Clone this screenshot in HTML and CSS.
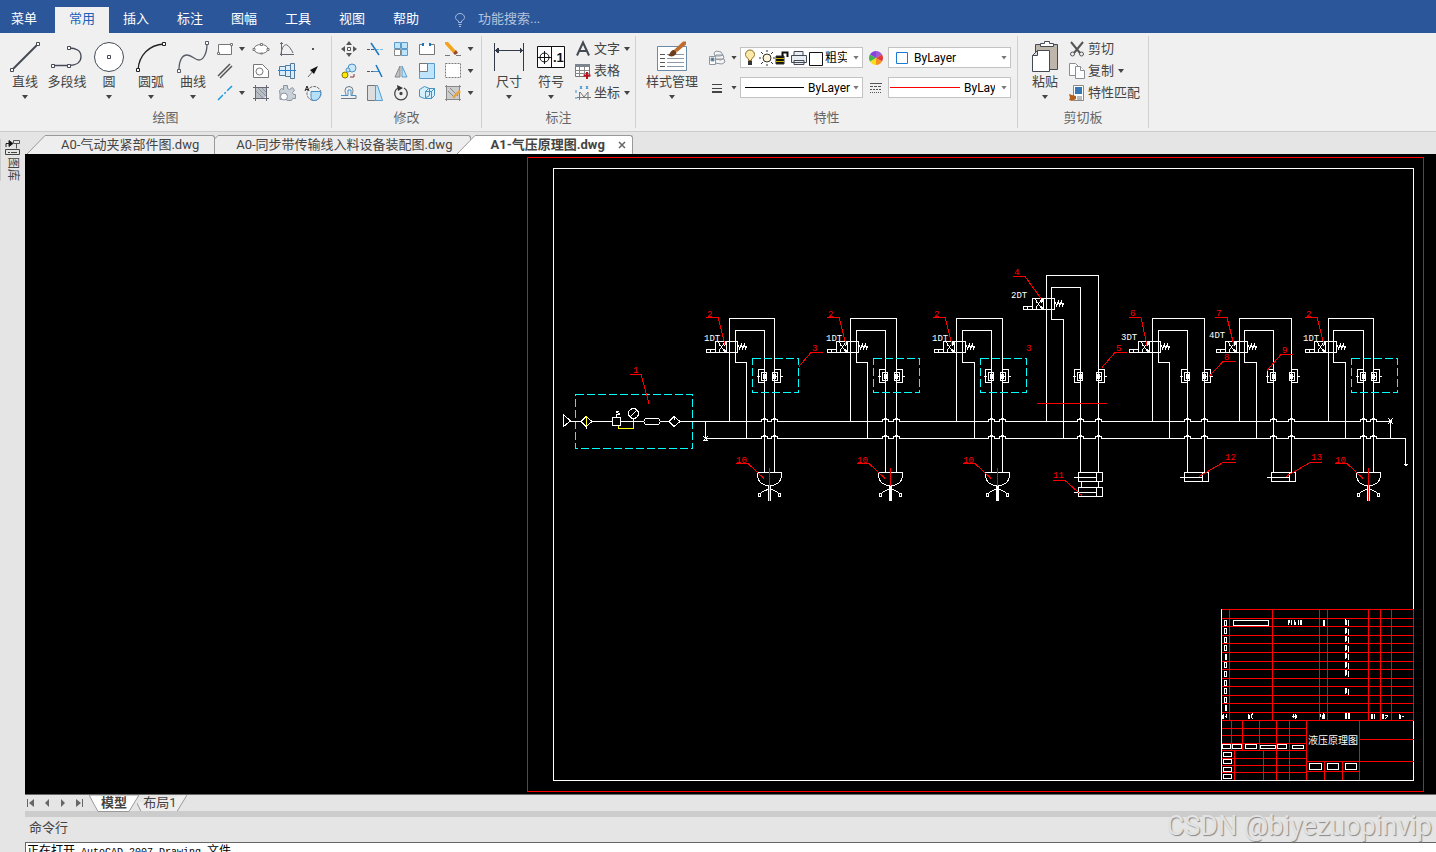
FILE: index.html
```html
<!DOCTYPE html>
<html lang="zh-CN">
<head>
    <meta charset="UTF-8">
    <meta name="viewport" content="width=device-width, initial-scale=1.0">
    <title>A1-气压原理图.dwg</title>
    <link rel="stylesheet" href="styles.css">
</head>
<body>

    <nav class="menubar">
        <button class="menu">菜单</button>
        <button class="menu active">常用</button>
        <button class="menu">插入</button>
        <button class="menu">标注</button>
        <button class="menu">图幅</button>
        <button class="menu">工具</button>
        <button class="menu">视图</button>
        <button class="menu">帮助</button>
        <label class="search">
            <svg width="12" height="14" viewBox="0 0 12 14" fill="none" stroke="#a9bbd9"><path d="M4.500 9.500V8C2.500 7 1.500 5.800 1.500 4.500a4.500 4 0 0 1 9 0C10.500 5.800 9.500 7 7.500 8v1.500zM4.500 11.500h3M5 13.500h2"/></svg>
            <input type="text" placeholder="功能搜索..." aria-label="功能搜索">
        </label>
    </nav>

    <div class="ribbon">
        <!-- 绘图 -->
        <section class="group draw">
            <div class="tools">
                <button class="big"><svg width="32" height="32" viewBox="0 0 32 32" fill="none" stroke="#444a55"><path d="M4 28L28 4" stroke-width="2"/><path d="M1.500 27.500h3v3h-3zM27.500 1.500h3v3h-3z" fill="#fff"/></svg><span>直线</span><i class="caret"></i></button>
                <button class="big"><svg width="32" height="32" viewBox="0 0 32 32" fill="none" stroke="#444a55"><path d="M2 24.500h16c7 0 12-3 12-9s-5-8.500-12-8.500" stroke-width="1.300"/><path d="M.5 23.500h3v3h-3zM16.500 23.500h3v3h-3zM16.500 5.500h3v3h-3z" fill="#fff"/></svg><span>多段线</span></button>
                <button class="big"><svg width="32" height="32" viewBox="0 0 32 32" fill="#fff" stroke="#444a55"><circle cx="16" cy="16" r="14.500"/><path d="M14.500 14.500h3v3h-3z"/></svg><span>圆</span><i class="caret"></i></button>
                <button class="big"><svg width="32" height="32" viewBox="0 0 32 32" fill="none" stroke="#222"><path d="M3 29C4 14 14 4 29 3" stroke-width="1.300"/><path d="M1.500 27.500h3v3h-3zM27.500 1.500h3v3h-3z" fill="#fff"/></svg><span>圆弧</span><i class="caret"></i></button>
                <button class="big"><svg width="32" height="32" viewBox="0 0 32 32" fill="none" stroke="#555b65"><path d="M2 29C2 20 5 14 10 14s8 5 12 5 8-6 8-16" stroke-width="1.300"/><path d="M.5 28.500h3v3h-3zM28.500.5h3v3h-3z" fill="#fff"/></svg><span>曲线</span><i class="caret"></i></button>
                <div class="grid grid-draw">
                    <button aria-label="矩形"><svg class="ic" viewBox="0 0 18 18" fill="#fff" stroke="#777"><path d="M2.500 4.500h13v10h-13z"/><path d="M1.500 12.500h2v2h-2zM14.500 3.500h2v2h-2z"/></svg></button>
                    <button aria-label="矩形选项"><i class="caret"></i></button>
                    <button aria-label="椭圆"><svg class="ic" viewBox="0 0 18 18" fill="#fff" stroke="#777"><ellipse cx="9" cy="9" rx="7" ry="4.500"/><path d="M8.500 3.500h2v2h-2zM1 8.500h2v2H1zM15 8.500h2v2h-2zM8.500 13h2v1h-2z"/></svg></button>
                    <button aria-label="公式曲线"><svg class="ic" viewBox="0 0 18 18" fill="none" stroke="#667"><path d="M3.500 2v14M2 14.500h14M3 14C4 6 7 4 9 5s4 4 6 8M2 3.500h3"/></svg></button>
                    <button aria-label="点"><svg class="ic" viewBox="0 0 18 18"><path d="M8 8h2v2H8z" fill="#555"/></svg></button>

                    <button aria-label="平行线"><svg class="ic" viewBox="0 0 18 18" stroke="#555" stroke-width="1.500"><path d="M2 14L14 2M4 16L16 4"/></svg></button>
                    <span></span>
                    <button aria-label="孔"><svg class="ic" viewBox="0 0 18 18" fill="#fff" stroke="#777"><path d="M1.500 2.500h9l6 6v7h-15z"/><circle cx="7.500" cy="9.500" r="3.500"/></svg></button>
                    <button aria-label="轴"><svg class="ic" viewBox="0 0 18 18" fill="#d8eefa" stroke="#56789a"><path d="M1.500 4.500h6v9h-6zM7.500 3.500h5v11h-5zM12.500 1.500h4v15h-4z"/><path d="M0 8.500h18" stroke="#2a82d0"/></svg></button>
                    <button aria-label="箭头"><svg class="ic" viewBox="0 0 18 18"><path d="M4 15l6-7" stroke="#666"/><path d="M14 4L6 8l4 4z" fill="#111"/></svg></button>

                    <button aria-label="中心线"><svg class="ic" viewBox="0 0 18 18"><path d="M2 16L16 2" stroke="#1b9be0" stroke-width="1.500" stroke-dasharray="7 2 2 2"/></svg></button>
                    <button aria-label="中心线选项"><i class="caret"></i></button>
                    <button aria-label="剖面线"><svg class="ic" viewBox="0 0 18 18"><path d="M3 3h12v8l-4 4H3z" fill="#b8bec4"/><path d="M3.500 1v16M14.500 1v16M1 3.500h16M1 14.500h16" stroke="#667" fill="none"/><path d="M4 7l7 7M6 4l8 8M10 4l4 4" stroke="#8b949c" fill="none"/></svg></button>
                    <button aria-label="齿轮"><svg class="ic" viewBox="0 0 18 18" fill="#c8d0d8" stroke="#8a94a2"><path d="M1.500 6.500l2-2 2 1v-4h4v3l2 1 3-2 2 3-2 2 1 2h2v4h-3l-1 2H9l-1-2H6l-4 1v-5z"/><circle cx="6" cy="12.500" r="3.500" fill="#fff"/></svg></button>
                    <button aria-label="局部放大"><svg class="ic" viewBox="0 0 18 18" fill="none" stroke="#666"><circle cx="10" cy="9.500" r="7" stroke-dasharray="3 1"/><path d="M7 7.500h9.500c1 6-3 9-6.500 9s-3-4-3-9z" fill="#b5e0fa" stroke="#4a8dc5"/><path d="M1 7l2-5 2 5M2 5.500h2" stroke="#222"/></svg></button>
                </div>
            </div>
            <h2>绘图</h2>
        </section>

        <!-- 修改 -->
        <section class="group modify">
            <div class="tools">
                <div class="grid grid-modify">
                    <button aria-label="平移"><svg class="ic" viewBox="0 0 18 18" fill="#555"><path d="M9 1l3 4H6zM9 17l3-4H6zM1 9l4-3v6zM17 9l-4-3v6z"/><path d="M7.500 7.500h3v3h-3z" fill="#fff" stroke="#555"/></svg></button>
                    <button aria-label="裁剪"><svg class="ic" viewBox="0 0 18 18" fill="none"><path d="M1 9.500h8" stroke="#556" stroke-dasharray="3 1"/><path d="M10 9.500h7" stroke="#79bdec" stroke-dasharray="3 1"/><path d="M5 3l8 12" stroke="#1778c4" stroke-width="1.500"/></svg></button>
                    <button aria-label="阵列"><svg class="ic" viewBox="0 0 18 18" fill="#bfe5fc" stroke="#5a9bc9"><path d="M2.500 2.500h6v6h-6zM9.500 2.500h6v6h-6zM9.500 9.500h6v6h-6z"/><path d="M2.500 9.500h6v6h-6z" fill="#fff" stroke="#888"/></svg></button>
                    <button aria-label="打断"><svg class="ic" viewBox="0 0 18 18" fill="#fff" stroke="#777"><path d="M5 4.500H1.500v10h15v-10H13"/><path d="M5 3v3M12 3v3" stroke="#1778c4" stroke-width="2"/></svg></button>
                    <button aria-label="删除"><svg class="ic" viewBox="0 0 18 18"><path d="M1 2l3 0 8 9-3 2-8-9z" fill="#f4a31c"/><path d="M9 13l3-3 2 3-3 2z" fill="#9b4a24"/><path d="M1 15.500h5M12 15.500h5" stroke="#777"/></svg></button>
                    <button aria-label="删除选项"><i class="caret"></i></button>

                    <button aria-label="平移复制"><svg class="ic" viewBox="0 0 18 18"><circle cx="12" cy="6" r="4" fill="#c9e9fb" stroke="#4990c8"/><circle cx="8" cy="8" r="2" fill="#c9e9fb" stroke="#4990c8"/><circle cx="5" cy="13" r="3" fill="#ffe800" stroke="#887a00"/><path d="M10 15h4v-3" fill="none" stroke="#8b3030"/></svg></button>
                    <button aria-label="延伸"><svg class="ic" viewBox="0 0 18 18"><path d="M1 9.500h6" stroke="#556" stroke-dasharray="3 1"/><path d="M7 9.500h6" stroke="#4990c8"/><path d="M10 3l6 12" stroke="#1778c4" stroke-width="1.500"/></svg></button>
                    <button aria-label="镜像"><svg class="ic" viewBox="0 0 18 18"><path d="M8 4v11H3z" fill="#bfc4c9" stroke="#888"/><path d="M10 4v11h5z" fill="#bfe5fc" stroke="#5a9bc9"/></svg></button>
                    <button aria-label="缩放"><svg class="ic" viewBox="0 0 18 18"><path d="M1.500 1.500h15v15h-15z" fill="#bfe5fc" stroke="#5a9bc9"/><path d="M1.500 1.500h8v8h-8z" fill="#fff" stroke="#777"/></svg></button>
                    <button aria-label="分解"><svg class="ic" viewBox="0 0 18 18" fill="#fff" stroke="#777"><path d="M1.500 1.500h15v14h-15z" stroke="#fff"/><path d="M1.500 1.500h15v14h-15z" stroke-dasharray="2 1"/></svg></button>
                    <button aria-label="分解选项"><i class="caret"></i></button>

                    <button aria-label="等距线"><svg class="ic" viewBox="0 0 18 18" fill="none" stroke="#6b7885"><path d="M1 14.500h15v-3h-3c-2 0 0-3 0-5a4 4 0 0 0-8 0c0 2 2 5 0 5H2"/><path d="M1 11.500h7V6h3v5.500h5" stroke="#4990c8"/></svg></button>
                    <button aria-label="拉伸"><svg class="ic" viewBox="0 0 18 18"><path d="M1.500 1.500h8v15h-8z" fill="#ddd" stroke="#777"/><path d="M9.500 1.500h2l5 15h-7z" fill="#bfe5fc" stroke="#5a9bc9"/></svg></button>
                    <button aria-label="旋转"><svg class="ic" viewBox="0 0 18 18" fill="none" stroke="#444" stroke-width="1.300"><path d="M6 4a6.300 6.300 0 1 0 6 0"/><path d="M5 1l6 3-5 3z" fill="#333" stroke="none"/><circle cx="9" cy="9.500" r="1" fill="#444"/></svg></button>
                    <button aria-label="块"><svg class="ic" viewBox="0 0 18 18" fill="#d5effd" stroke="#4a91bd"><path d="M1.500 5.500l5-3 5 2v7l-5 3-5-2zM7.500 7.500h6v7h-6zM7.500 7.500l3-3h6l-3 3zM13.500 14.500l3-3v-7l-3 3z"/></svg></button>
                    <button aria-label="填充编辑"><svg class="ic" viewBox="0 0 18 18"><path d="M2.500 2.500h13v13h-13z" fill="#ccc" stroke="#666"/><path d="M1 2.500h16M1 15.500h16M2.500 1v16M15.500 1v16M4 7l7 7M6 4l8 8" stroke="#888"/><path d="M8 13l7-7 2 2-7 6z" fill="#e8a33a"/></svg></button>
                    <button aria-label="填充选项"><i class="caret"></i></button>
                </div>
            </div>
            <h2>修改</h2>
        </section>

        <!-- 标注 -->
        <section class="group annotate">
            <div class="tools">
                <button class="big"><svg width="32" height="32" viewBox="0 0 32 32" fill="none" stroke="#333b48" shape-rendering="crispEdges"><path d="M1.500 2v28M30.500 2v28M2 9.500h28"/><path d="M2 9.500l3-2v4zM30 9.500l-3-2v4z" fill="#333b48"/></svg><span>尺寸</span><i class="caret"></i></button>
                <button class="big"><svg width="32" height="32" viewBox="0 0 32 32" fill="#fff" stroke="#111"><path d="M2.500 5.500h27v21h-27zM16.500 5.500v21"/><path d="M3 16.500h13M9.500 10v13"/><circle cx="9.500" cy="16.500" r="4.500" fill="none"/><text class="icon-digit" x="18" y="21">.1</text></svg><span>符号</span><i class="caret"></i></button>
                <div class="list">
                    <button><svg class="ic" viewBox="0 0 18 18"><path d="M3 15.500L9 2.500l6 13M5.500 11h7" fill="none" stroke="#444a52" stroke-width="2"/></svg>文字<i class="caret"></i></button>
                    <button><svg class="ic" viewBox="0 0 18 18"><path d="M1.500 2.500h14v12h-14z" fill="#fff" stroke="#777"/><path d="M1 2h15v3H1z" fill="#7c858d"/><path d="M1 8.500h14M1 11.500h14M5.500 5v9M10.500 5v9" stroke="#888"/><path d="M13 10v7M9.500 13.500h7" stroke="#c01020" stroke-width="2"/></svg>表格</button>
                    <button><svg class="ic" viewBox="0 0 18 18" fill="none"><path d="M5.500 16V8M3 13.500h14M6 8l4 5 4-5v8" stroke="#777"/><path d="M6 2l2 3m0-3L6 5M12 2l2 3m0-3l-2 3M2 6v3M1 14h2" stroke="#3a8fd0"/></svg>坐标<i class="caret"></i></button>
                </div>
            </div>
            <h2>标注</h2>
        </section>

        <!-- 特性 -->
        <section class="group props">
            <div class="tools">
                <button class="big wide"><svg width="32" height="32" viewBox="0 0 32 32"><path d="M1.500 5.500h29v24h-29z" fill="#fff" stroke="#6b8aa8"/><path d="M4 13.500h5M4 17.500h5M4 21.500h5M4 25.500h5" stroke="#555"/><path d="M11 13.500h17M11 17.500h17M11 21.500h17M11 25.500h17" stroke="#8b99a8"/><path d="M12 14c2 0 2-4 5-5 3 0 4 2 3 4-2 3-6 3-8 1z" fill="#6c3c1c"/><path d="M18 9l9-8.500 3 0v3L21 11z" fill="#c06a2b"/></svg><span>样式管理</span><i class="caret"></i></button>
                <div class="prop-rows">
                    <div class="prop-row">
                        <button class="mini" aria-label="图层"><svg class="ic" viewBox="0 0 18 18" fill="#f4f4f4" stroke="#8d97a1"><path d="M6 12l2-2 8 0 1 3-3 2-8-1zM6 8l2-2 7 0 1 3-3 2-7-1zM6 4l2-2 5 1 2 3-3 1-5 0z"/><path d="M1.500 7.500h6v8h-6z" fill="#fff"/><path d="M3 9h3v3H3z" fill="#2f6fa8"/></svg><i class="caret"></i></button>
                        <div class="combo">
                            <svg width="84" height="17" viewBox="0 0 84 17" fill="none" stroke="#333">
                                <path d="M7.500 11.500V10C5.500 8.500 4.500 7 4.500 5.500a4.500 4.500 0 0 1 9 0c0 1.500-1 3-3 4.500v1.500z" fill="#ffe9a8" stroke="#8a6a20"/><path d="M7 13h4M7 15h4" stroke-width="2"/>
                                <circle cx="26" cy="9" r="4" fill="#fff6d8"/><path d="M26 1v2M26 15v2M18 9h2M32 9h2M20 3l2 2M32 3l-2 2M20 15l2-2M32 15l-2-2"/>
                                <path d="M35 7h8v8h-8z" fill="#111"/><path d="M35 9.500h8M35 12.500h8" stroke="#c8b400"/><path d="M41.500 7V3.500h5V8" stroke="#111" stroke-width="2"/>
                                <path d="M53 6V2.500h9V6M50.500 6.500h15v7h-15zM53 11.500h10v4h-10z" fill="#e8edf2" stroke="#444a55"/>
                                <path d="M68.500 3.500h13v13h-13z" fill="#fff" stroke="#111"/>
                            </svg>
                            <select aria-label="当前图层"><option>粗实线层</option></select><i class="caret"></i>
                        </div>
                        <button class="mini dot" aria-label="颜色"><svg width="14" height="14" viewBox="0 0 14 14"><path d="M7 7V0a7 7 0 0 1 6 3.500z" fill="#a05ad6"/><path d="M7 7l6-3.500a7 7 0 0 1 0 7z" fill="#e23a3a"/><path d="M7 7l6 3.500A7 7 0 0 1 7 14z" fill="#f79020"/><path d="M7 7v7a7 7 0 0 1-6-3.500z" fill="#f5e020"/><path d="M7 7l-6 3.500a7 7 0 0 1 0-7z" fill="#3fb54a"/><path d="M7 7L1 3.500A7 7 0 0 1 7 0z" fill="#8a3fe0"/></svg></button>
                        <div class="combo">
                            <svg width="20" height="14" viewBox="0 0 20 14"><path d="M7.500 1.500h11v11h-11z" fill="#fff" stroke="#1a7bd0"/></svg>
                            <select class="color-name" aria-label="颜色"><option>ByLayer</option></select><i class="caret"></i>
                        </div>
                    </div>
                    <div class="prop-row">
                        <button class="mini" aria-label="线宽"><svg class="ic" viewBox="0 0 18 18" stroke="#444"><path d="M4 5.500h10M4 9.500h10"/><path d="M4 13h10" stroke-width="2"/></svg><i class="caret"></i></button>
                        <div class="combo line">
                            <svg width="64" height="3" viewBox="0 0 64 3" stroke="#000"><path d="M4 1.500h59"/></svg>
                            <select aria-label="线宽"><option>ByLayer</option></select><i class="caret"></i>
                        </div>
                        <button class="mini dot" aria-label="线型"><svg width="14" height="14" viewBox="0 0 14 14" stroke="#555"><path d="M1 2.500h12"/><path d="M1 5.500h12" stroke-dasharray="3 1"/><path d="M1 8.500h12" stroke-dasharray="2 1"/><path d="M1 11.500h12" stroke-dasharray="1 1"/></svg></button>
                        <div class="combo line">
                            <svg width="72" height="3" viewBox="0 0 72 3" stroke="#f00"><path d="M1 1.500h70"/></svg>
                            <select class="line-type" aria-label="线型"><option>ByLayer</option></select><i class="caret"></i>
                        </div>
                    </div>
                </div>
            </div>
            <h2>特性</h2>
        </section>

        <!-- 剪切板 -->
        <section class="group clip">
            <div class="tools">
                <button class="big"><svg width="32" height="32" viewBox="0 0 32 32" stroke="#444a55"><path d="M6.500 3.500h22v25h-22z" fill="#beb6aa"/><path d="M11.500 5.500v-3h4v-2h5v2h4v3z" fill="#fff"/><path d="M3.500 14.500l5-5h12v21h-17z" fill="#fff"/><path d="M3.500 14.500h5v-5z" fill="#d6dadd"/></svg><span>粘贴</span><i class="caret"></i></button>
                <div class="list">
                    <button><svg class="ic" viewBox="0 0 18 18" fill="none" stroke="#555"><path d="M3 2l9 11M15 2L6 13" stroke-width="2"/><circle cx="4.500" cy="14" r="2"/><circle cx="13.500" cy="14" r="2"/></svg>剪切</button>
                    <button><svg class="ic" viewBox="0 0 18 18" fill="#fff" stroke="#8a8f94"><path d="M1.500 1.500h6l3 3v9h-9z"/><path d="M7.500 4.500h5l4 4v8h-9z"/><path d="M12.500 4.500v4h4"/></svg>复制<i class="caret"></i></button>
                    <button><svg class="ic" viewBox="0 0 18 18"><path d="M5.500 1.500h10v15h-10z" fill="#fff" stroke="#888"/><path d="M7 3h7v7H7z" fill="#3677b5"/><path d="M9 13h5M9 15h5" stroke="#777"/><path d="M1 10l3 1 4 1v3l-4 2-3-1 1-2z" fill="#b2601e"/></svg>特性匹配</button>
                </div>
            </div>
            <h2>剪切板</h2>
        </section>
    </div>

    <div class="workspace">
        <aside class="dock">
            <button class="dock-tab">
                <svg width="15" height="16" viewBox="0 0 15 16" fill="none" stroke="#222"><path d="M1 8V4.500h4" /><path d="M4 1.500l4 3-4 3z" fill="#111"/><path d="M8.500 1.500h6v3h-6zM11.500 4.500v5" stroke="#555"/><path d="M.5 10.500h14v5H.5zM3 13.500h2M6 13.500h6" stroke="#444"/></svg>
                <span>图库</span>
            </button>
        </aside>

        <main class="main">
            <div class="doc-tabs">
                <div class="doc-tab first">
                    <svg class="slant" width="18" height="19" viewBox="0 0 18 19"><path d="M0 19L18 0v19z" fill="#eee"/><path d="M0 19L18 .5" stroke="#999"/></svg><button>A0-气动夹紧部件图.dwg</button>
                </div>
                <div class="doc-tab second">
                    <svg class="slant" width="18" height="19" viewBox="0 0 18 19"><path d="M0 19L18 0v19z" fill="#eee"/><path d="M0 19L18 .5" stroke="#999"/></svg><button>A0-同步带传输线入料设备装配图.dwg</button>
                </div>
                <div class="doc-tab current">
                    <svg class="slant" width="18" height="19" viewBox="0 0 18 19"><path d="M0 19L18 0v19z" fill="#fff"/><path d="M0 19L18 .5" stroke="#999"/></svg><button>A1-气压原理图.dwg</button>
                    <button class="close" aria-label="关闭"><svg width="8" height="8" viewBox="0 0 8 8" stroke="#666" stroke-width="1.500"><path d="M1 1l6 6M7 1L1 7"/></svg></button>
                </div>
            </div>

            <div class="canvas">
                <svg class="drawing" viewBox="25 154 1411 640" preserveAspectRatio="xMidYMin meet">
                    <defs>
                        <!-- solenoid valve, origin on the supply riser -->
                        <g id="valve">
                            <path d="M-14 0h22v11h-22zM-3 0v11M-23 8h9v3h-9zM-19 8v3"/>
                            <path d="M-11 1l6 9M-5 1l-6 9M-10 1v3M-10 7v3M-5 1v3M-5 7v3M-4 0v3M-4 8v3"/>
                            <path d="M8 4h1l1 3 2-4 1 4 2-4 1 4 1-2"/>
                        </g>
                        <!-- throttle check valve, origin on the pipe -->
                        <g id="throttle">
                            <path d="M0-7h-6V6h6M-3-4h5V4h-5zM-8 0h3M-2 0h4M-1-2h2v4h-2z"/>
                        </g>
                        <g id="gripper">
                            <path d="M-12 0h24v4c-1 6-6 9-12 9s-11-3-12-9z"/>
                            <path class="red" d="M0-5v18"/>
                            <path d="M0 13v15M-1 13v15M1 13v15M-9 21c3-3 6-4 9-4s6 1 9 4M-11 21h2v3h-2zM9 21h2v3h-2z"/>
                        </g>
                        <path id="cylinder" d="M0 0h24v9H0zM18 0v9M-5 5h23"/>
                        <g id="tag2"><path d="M0 0h12l7 27"/><text class="number" x="1" y="-1">2</text></g>
                        <g id="tag10"><path d="M0 0h12l16 15"/><text class="number" x="0" y="-1">10</text></g>
                        <g id="hop"><path class="gap" d="M-3 0h7"/><path d="M-4 0h1v-2h2v-1h2v1h2v2h1"/></g>
                    </defs>

                    <rect class="red" x="527.5" y="157.5" width="896" height="634"/>
                    <rect x="553.5" y="168.5" width="860" height="612"/>

                    <!-- air preparation unit -->
                    <path class="cyan" d="M575.5 394.500h117v54h-117z"/>
                    <path d="M563.5 414.500v12l7-5.500zM570 421.500h11M581 421.500l5-5 6 5-6 5zM592 421.500h20M586.500 426v3M612.500 417.500h8v8h-8zM616 417v-2l4-1-4-2 3-1M620 421.500h23M643.500 421.500l2-3h13l2 3-2 3h-13zM660 421.500h9M669 421.500l5-5 6 5-6 5zM674.500 416v4M680 421.500h12"/>
                    <circle cx="633.500" cy="413.500" r="5"/><path d="M630 417l7-7M633.500 419v3"/>
                    <path class="yellow" d="M586.500 416v10M618.500 426v2.500h15V422"/>

                    <!-- main lines -->
                    <path d="M692 421.500H1390.500V438.500M705.500 421.500V438.500H1405.500V466M703 436l5 5M708 436l-5 5M703 440h5M1388 418l5 6M1393 418l-5 6M1404 464h4l-2 2z"/>
                    <g class="hops">
                        <use href="#hop" x="764.500" y="421.500"/><use href="#hop" x="774.500" y="421.500"/>
                        <use href="#hop" x="885.500" y="421.500"/><use href="#hop" x="896.500" y="421.500"/>
                        <use href="#hop" x="991.500" y="421.500"/><use href="#hop" x="1002.500" y="421.500"/>
                        <use href="#hop" x="1080.500" y="421.500"/><use href="#hop" x="1098.500" y="421.500"/>
                        <use href="#hop" x="1187.500" y="421.500"/><use href="#hop" x="1204.500" y="421.500"/>
                        <use href="#hop" x="1273.500" y="421.500"/><use href="#hop" x="1291.500" y="421.500"/>
                        <use href="#hop" x="1363.500" y="421.500"/><use href="#hop" x="1373.500" y="421.500"/>
                        <use href="#hop" x="764.500" y="438.500"/><use href="#hop" x="774.500" y="438.500"/>
                        <use href="#hop" x="885.500" y="438.500"/><use href="#hop" x="896.500" y="438.500"/>
                        <use href="#hop" x="991.500" y="438.500"/><use href="#hop" x="1002.500" y="438.500"/>
                        <use href="#hop" x="1080.500" y="438.500"/><use href="#hop" x="1098.500" y="438.500"/>
                        <use href="#hop" x="1187.500" y="438.500"/><use href="#hop" x="1204.500" y="438.500"/>
                        <use href="#hop" x="1273.500" y="438.500"/><use href="#hop" x="1291.500" y="438.500"/>
                        <use href="#hop" x="1363.500" y="438.500"/><use href="#hop" x="1373.500" y="438.500"/>
                    </g>

                    <!-- branch piping -->
                    <path d="M729.5 421V318.500H774.500V473M764.500 473V330.500H735.500V362.500H746.500V438"/>
                    <path d="M850.5 421V318.500H896.500V473M885.500 473V330.500H856.500V362.500H867.500V438"/>
                    <path d="M956.5 421V318.500H1002.500V473M991.500 473V330.500H962.500V362.500H974.500V438"/>
                    <path d="M1046.5 421V275.500H1098.500V473M1080.500 473V287.500H1051.500V319.500H1063.500V438"/>
                    <path d="M1152.5 421V318.500H1204.500V473M1187.500 473V330.500H1158.500V362.500H1169.500V438"/>
                    <path d="M1239.5 421V318.500H1291.500V473M1273.500 473V330.500H1244.500V362.500H1256.500V438"/>
                    <path d="M1328.5 421V318.500H1373.500V473M1363.500 473V330.500H1333.500V362.500H1345.500V438"/>

                    <path class="cyan" d="M752.5 358.500h46v34h-46zM873.500 358.500h46v34h-46zM980.500 358.500h46v34h-46zM1351.500 358.500h46v34h-46z"/>

                    <use href="#valve" x="729.500" y="341.500"/>
                    <use href="#valve" x="850.500" y="341.500"/>
                    <use href="#valve" x="957.500" y="341.500"/>
                    <use href="#valve" x="1046.500" y="298.500"/>
                    <use href="#valve" x="1152.500" y="341.500"/>
                    <use href="#valve" x="1239.500" y="341.500"/>
                    <use href="#valve" x="1328.500" y="341.500"/>

                    <use href="#throttle" transform="translate(764.5 376.5)"/><use href="#throttle" transform="translate(774.5 376.5) scale(-1 1)"/>
                    <use href="#throttle" transform="translate(885.5 376.5)"/><use href="#throttle" transform="translate(896.5 376.5) scale(-1 1)"/>
                    <use href="#throttle" transform="translate(991.5 376.5)"/><use href="#throttle" transform="translate(1002.5 376.5) scale(-1 1)"/>
                    <use href="#throttle" transform="translate(1080.5 376.5)"/><use href="#throttle" transform="translate(1098.5 376.5) scale(-1 1)"/>
                    <use href="#throttle" transform="translate(1187.5 376.5)"/><use href="#throttle" transform="translate(1204.5 376.5) scale(-1 1)"/>
                    <use href="#throttle" transform="translate(1273.5 376.5)"/><use href="#throttle" transform="translate(1291.5 376.5) scale(-1 1)"/>
                    <use href="#throttle" transform="translate(1363.5 376.5)"/><use href="#throttle" transform="translate(1373.5 376.5) scale(-1 1)"/>

                    <use href="#gripper" x="769.500" y="472.500"/>
                    <use href="#gripper" x="890.500" y="472.500"/>
                    <use href="#gripper" x="997.500" y="472.500"/>
                    <use href="#gripper" x="1368.500" y="472.500"/>
                    <path class="red" d="M769.5 486v15M1368.500 486v15"/>

                    <use href="#cylinder" x="1078.500" y="472.500"/>
                    <use href="#cylinder" x="1078.500" y="487.500"/>
                    <path d="M1081.5 481v6M1098.500 481v6"/>
                    <use href="#cylinder" x="1184.500" y="472.500"/>
                    <use href="#cylinder" x="1271.500" y="472.500"/>

                    <!-- balloons -->
                    <g class="red">
                        <use href="#tag2" x="706" y="317.500"/>
                        <use href="#tag2" x="827" y="317.500"/>
                        <use href="#tag2" x="933" y="317.500"/>
                        <use href="#tag2" x="1305" y="317.500"/>
                        <use href="#tag10" x="736" y="463.500"/>
                        <use href="#tag10" x="857" y="463.500"/>
                        <use href="#tag10" x="963" y="463.500"/>
                        <use href="#tag10" x="1335" y="463.500"/>
                        <path d="M630 374.500h11l8 29M823 352.500h-12l-12 14M1013 276.500h12l16 22M1127 352.500h-12l-13 15M1129 317.500h12l6 28M1215 317.500h12l7 28M1236 361.500h-13l-14 15M1293 354.500h-12l-14 16M1053 480.500h12l17 15M1236 462.500h-13l-24 14M1322 462.500h-12l-24 14M1037 403.500h70"/>
                        <text class="number" x="633" y="373">1</text>
                        <text class="number" x="812" y="351">3</text>
                        <text class="number" x="1026" y="351">3</text>
                        <text class="number" x="1014" y="275">4</text>
                        <text class="number" x="1116" y="351">5</text>
                        <text class="number" x="1130" y="316">6</text>
                        <text class="number" x="1216" y="316">7</text>
                        <text class="number" x="1224" y="360">8</text>
                        <text class="number" x="1282" y="353">9</text>
                        <text class="number" x="1053" y="478">11</text>
                        <text class="number" x="1225" y="460">12</text>
                        <text class="number" x="1311" y="460">13</text>
                    </g>
                    <g class="coils">
                        <text x="704" y="341">1DT</text>
                        <text x="826" y="341">1DT</text>
                        <text x="932" y="341">1DT</text>
                        <text x="1011" y="298">2DT</text>
                        <text x="1121" y="340">3DT</text>
                        <text x="1209" y="338">4DT</text>
                        <text x="1303" y="341">1DT</text>
                    </g>

                    <!-- parts list and title block -->
                    <path class="red" d="M1221.5 609.500h192M1221.500 618.500h192M1221.500 626.500h192M1221.500 635.500h192M1221.500 643.500h192M1221.500 652.500h192M1221.500 661.500h192M1221.500 669.500h192M1221.500 678.500h192M1221.500 686.500h192M1221.500 695.500h192M1221.500 703.500h192M1221.500 712.500h192M1221.500 720.500h192"/>
                    <path class="red" d="M1229.5 609v111M1272.500 609v111M1319.500 609v111M1327.500 609v111M1368.500 609v111M1380.500 609v111M1391.500 609v111M1413.500 609v111"/>
                    <path class="red" d="M1221.5 728.500h85M1221.500 735.500h85M1221.500 743.500h85M1221.500 750.500h85M1221.500 758.500h85M1221.500 765.500h85M1221.500 772.500h85M1231.500 720v30M1242.500 720v30M1259.500 720v30M1276.500 720v60M1289.500 720v60M1234.500 750v30M1263.500 750v30M1306.500 720v60M1359.500 720v60M1306.500 761.500h107M1306.500 771.500h53M1324.500 761v19M1342.500 761v19M1359.500 739.500h54"/>
                    <path d="M1221.5 609v171M1233.500 620.500h35v5h-35z"/>
                    <path d="M1224.5 620.500h2v5h-2zM1224.500 628.500h2v5h-2zM1224.500 637.500h2v5h-2zM1224.500 645.500h2v5h-2zM1225.500 654v6M1226.500 654v6M1224.500 662.500h2v5h-2zM1224.500 671.500h2v5h-2zM1224.500 680.500h2v5h-2zM1224.500 688.500h2v5h-2zM1224.500 697.500h2v5h-2zM1225.500 705v6M1226.500 705v6"/>
                    <path d="M1288.5 620v5M1289.500 620v3M1291.500 620v5M1294.500 620v5M1295.500 622v3M1298.500 620v5M1300.500 620v5M1301.500 620v5M1323.500 620v6M1324.500 620v6"/>
                    <path d="M1345.500 619v6M1346.500 620v5M1348.500 620v6M1345.500 628v6M1346.500 628v5M1348.500 629v6M1345.500 636v6M1346.500 636v5M1348.500 637v6M1345.500 645v6M1346.500 645v5M1348.500 646v6M1345.500 653v6M1346.500 653v5M1348.500 654v6M1345.500 662v6M1346.500 662v5M1348.500 663v6M1345.500 670v6M1346.500 670v5M1348.500 671v6M1345.500 688v6M1346.500 688v5M1348.500 689v6"/>
                    <path d="M1222.5 715v4M1223.500 714v5M1225 716.500h2M1226.500 714v4M1248.500 714v5M1249.500 715v4M1251.500 714v3l1 2M1252.500 713v2M1292 716.500h4M1293.500 714v4M1295.500 714v5M1296.500 715v3M1320.500 714v3M1322.500 715v4M1324.500 714v5M1323.500 713v6M1345.500 713v6M1346.500 713v6M1348.500 713v6M1349.500 713v6M1371.500 714v5M1372.500 714v5M1374.500 714v5M1382.500 714v5M1383.500 714v5M1385.500 715l2 1-2 3M1399.500 714v5M1400.500 715v4M1402 716.500h2"/>
                    <path d="M1222.5 744.500h8v4h-8zM1232.500 744.500h9v4h-9zM1245.500 744.500h11v4h-11zM1260.500 745.500h15v3h-15zM1277.500 744.500h9v4h-9zM1292.500 745.500h11v3h-11zM1223.500 752.500h8v4h-8zM1223.500 759.500h8v4h-8zM1223.500 767.500h8v4h-8zM1223.500 774.500h8v4h-8zM1309.500 763.500h12v6h-12zM1327.500 763.500h11v6h-11zM1345.500 763.500h11v6h-11z"/>
                    <text class="title-text" x="1308" y="744">液压原理图</text>
                </svg>
            </div>

            <div class="layout-tabs">
                <button class="nav" aria-label="第一页"><svg width="8" height="8" viewBox="0 0 8 8" fill="#666"><path d="M0 0h1v8H0zM7 0v8L2 4z"/></svg></button>
                <button class="nav" aria-label="上一页"><svg width="8" height="8" viewBox="0 0 8 8" fill="#666"><path d="M6 0v8L2 4z"/></svg></button>
                <button class="nav" aria-label="下一页"><svg width="8" height="8" viewBox="0 0 8 8" fill="#666"><path d="M2 0v8l4-4z"/></svg></button>
                <button class="nav" aria-label="最后一页"><svg width="8" height="8" viewBox="0 0 8 8" fill="#666"><path d="M1 0v8l5-4zM7 0h1v8H7z"/></svg></button>
                <button class="layout current"><svg width="50" height="17" viewBox="0 0 50 17"><path d="M0 0l9 16.500h31L50 0z" fill="#fff" stroke="#999"/></svg><span>模型</span></button>
                <button class="layout"><svg width="50" height="17" viewBox="0 0 50 17"><path d="M0 8l4 8.500h36L50 0" fill="#eee" stroke="#999"/></svg><span>布局1</span></button>
            </div>

            <div class="splitter"></div>

            <div class="command">
                <h2>命令行</h2>
                <div class="log" role="log">正在打开<span> AutoCAD 2007 Drawing </span>文件</div>
            </div>
        </main>
    </div>

    <div class="watermark">CSDN @biyezuopinvip</div>

</body>
</html>
```

FILE: styles.css
```css
* {
    box-sizing: border-box;
}

body {
    margin: 0;
    height: 100vh;
    display: flex;
    flex-direction: column;
    overflow: hidden;
    background: #e5e5e5;
    color: #444;
    font-family: Roboto, "Noto Sans CJK SC", sans-serif;
    font-size: 13px;
    line-height: 18px;
}

button {
    padding: 0;
    border: none;
    background: none;
    color: inherit;
    font: inherit;
    white-space: nowrap;
}

svg {
    flex: none;
    display: block;
}

h2 {
    margin: 0;
    font-size: 13px;
    font-weight: normal;
}

/* menu bar */
.menubar {
    height: 33px;
    flex: none;
    display: flex;
    align-items: flex-end;
    padding-left: 1px;
    background: #2b579a;
    color: #fff;
}

.menu {
    width: 54px;
    height: 26px;
    padding-right: 8px;
    padding-bottom: 2px;
}

.menu.active {
    padding-right: 0;
    background: #f0f0f0;
    color: #1a62b8;
}

.menu.active ~ .menu {
    padding-right: 0;
}

.search {
    height: 26px;
    display: flex;
    align-items: center;
    gap: 12px;
    margin-left: 21px;
}

.search input {
    width: 140px;
    padding: 0 0 2px;
    border: none;
    outline: none;
    background: none;
    color: #fff;
    font: inherit;
}

.search input::placeholder {
    color: #b5c3dc;
}

/* ribbon */
.ribbon {
    height: 99px;
    flex: none;
    display: flex;
    padding-top: 3px;
    padding-bottom: 3px;
    background: #f0f0f0;
    border-bottom: 1px solid #ccc;
}

.group {
    flex: none;
    border-right: 1px solid #d0d0d0;
}

.group h2 {
    text-align: center;
    color: #666;
}

.tools {
    height: 73px;
    display: flex;
    padding-top: 2px;
}

.draw {
    width: 332px;
}

.modify {
    width: 150px;
}

.annotate {
    width: 154px;
}

.props {
    width: 382px;
}

.clip {
    width: 131px;
}

.draw .tools,
.modify .tools {
    padding-left: 4px;
}

.annotate .tools,
.clip .tools {
    padding-left: 6px;
}

.props .tools {
    padding-left: 8px;
}

.big {
    width: 42px;
    display: flex;
    flex-direction: column;
    align-items: center;
    padding-top: 3px;
}

.big.wide {
    width: 56px;
}

.big span {
    line-height: 18px;
}

.caret {
    flex: none;
    width: 6px;
    height: 4px;
    background: #444;
    clip-path: polygon(0 0, 100% 0, 50% 100%);
}

.big .caret {
    margin-top: 4px;
}

.grid {
    display: grid;
    grid-auto-rows: 22px;
}

.grid-draw {
    grid-template-columns: 22px 12px 26px 26px 26px;
}

.grid-modify {
    grid-template-columns: repeat(5, 26px) 9px;
}

.grid button {
    display: flex;
    align-items: center;
    justify-content: center;
}

.ic {
    width: 18px;
    height: 18px;
}

.list {
    margin-left: 2px;
}

.list button {
    height: 22px;
    display: flex;
    align-items: center;
    gap: 2px;
    line-height: 16px;
}

.list .caret {
    margin-left: 2px;
}

.icon-digit {
    fill: #111;
    stroke: none;
    font-family: "Liberation Sans", sans-serif;
    font-size: 13px;
    font-weight: bold;
}

.prop-rows {
    display: flex;
    flex-direction: column;
    gap: 9px;
    padding-top: 9px;
}

.prop-row {
    display: flex;
    align-items: center;
}

.mini {
    width: 40px;
    display: flex;
    align-items: center;
    justify-content: flex-end;
    gap: 5px;
    padding-right: 3px;
}

.mini.dot {
    width: 25px;
    justify-content: center;
    padding: 0;
}

.combo {
    width: 123px;
    height: 21px;
    display: flex;
    align-items: center;
    background: #fff;
    border: 1px solid #c3c3c3;
    padding-right: 3px;
}

.combo select {
    flex: 1;
    min-width: 0;
    margin-right: 6px;
    padding: 0;
    border: none;
    appearance: none;
    background: none;
    color: #000;
    font-family: Roboto, "Noto Sans CJK SC", sans-serif;
    font-size: 12px;
    line-height: 18px;
    text-overflow: clip;
}

.combo .color-name {
    margin-left: 5px;
}

.combo.line select {
    margin-left: 3px;
    margin-right: 2px;
}

.combo.line .line-type {
    margin-right: 6px;
}

.combo .caret {
    background: #777;
}

/* workspace */
.workspace {
    flex: 1;
    min-height: 0;
    display: flex;
}

.dock {
    width: 25px;
    flex: none;
    padding-top: 7px;
}

.dock-tab {
    width: 24px;
    display: flex;
    flex-direction: column;
    align-items: center;
    border-left: 1px solid #ccc;
}

.dock-tab span {
    writing-mode: vertical-rl;
    text-orientation: sideways;
    font-size: 12px;
    line-height: 16px;
    padding-top: 2px;
}

.main {
    flex: 1;
    min-width: 0;
    display: flex;
    flex-direction: column;
}

/* document tabs */
.doc-tabs {
    height: 22px;
    flex: none;
    display: flex;
    align-items: flex-end;
    padding-left: 2px;
}

.doc-tab {
    height: 19px;
    display: flex;
    position: relative;
}

.doc-tab button {
    height: 19px;
    padding: 0 15px 0 16px;
    border-top: 1px solid #999;
    background: #eee;
    line-height: 16px;
}

.doc-tab button:last-child {
    border-right: 1px solid #999;
    border-top-right-radius: 3px;
}

.doc-tab.first {
    z-index: 1;
}

.doc-tab.second {
    margin-left: -15px;
}

.doc-tab.second button {
    padding: 0 18px;
}

.doc-tab.current {
    z-index: 2;
    margin-left: -14px;
}

.doc-tab.current button {
    padding: 0 0 0 15px;
    background: #fff;
    font-weight: bold;
}

.doc-tab.current .close {
    width: 28px;
    padding-left: 13px;
}

/* drawing area */
.canvas {
    flex: 1;
    min-height: 0;
    background: #000;
}

.drawing {
    width: 100%;
    height: 100%;
    fill: none;
    stroke: #fff;
    stroke-width: 1px;
    shape-rendering: crispEdges;
}

.drawing .red {
    stroke: #f00;
}

.drawing .cyan {
    stroke: #0ff;
    stroke-dasharray: 8 3;
}

.drawing .yellow {
    stroke: #ff0;
}

.drawing .gap {
    stroke: #000;
}

.drawing text {
    stroke: none;
    fill: #fff;
    font-family: "Liberation Mono", monospace;
    font-size: 9px;
}

.drawing .number {
    fill: #f00;
}

.drawing .title-text {
    font-family: "Noto Sans CJK SC", sans-serif;
    font-size: 10px;
}

/* layout tabs */
.layout-tabs {
    height: 17px;
    flex: none;
    display: flex;
    align-items: center;
    padding-left: 2px;
    border-top: 1px solid #666;
}

.nav {
    width: 16px;
}

.layout {
    display: grid;
    place-items: center;
    margin-left: -2px;
    line-height: 16px;
}

.layout svg,
.layout span {
    grid-area: 1 / 1;
}

.layout span {
    padding-right: 4px;
}

.layout.current {
    position: relative;
    z-index: 1;
    font-weight: bold;
}

.layout.current span {
    padding-right: 0;
}

.splitter {
    height: 6px;
    flex: none;
    background: #ccc;
}

/* command line */
.command {
    height: 35px;
    flex: none;
    overflow: hidden;
}

.command h2 {
    height: 25px;
    padding-left: 4px;
    line-height: 22px;
}

.log {
    height: 40px;
    padding-left: 1px;
    border-top: 1px solid #666;
    border-left: 1px solid #666;
    background: #fff;
    color: #000;
    font-family: "Noto Sans CJK SC", sans-serif;
    font-size: 12px;
    line-height: 14px;
}

.log span {
    font-family: "Liberation Mono", monospace;
    font-size: 10px;
    white-space: pre;
}

.watermark {
    position: absolute;
    right: 4px;
    bottom: 10px;
    color: #e2e2e2;
    font-family: Roboto, sans-serif;
    font-size: 27px;
    line-height: 32px;
    text-shadow: 1px 1px 1px #888;
    pointer-events: none;
}
```
